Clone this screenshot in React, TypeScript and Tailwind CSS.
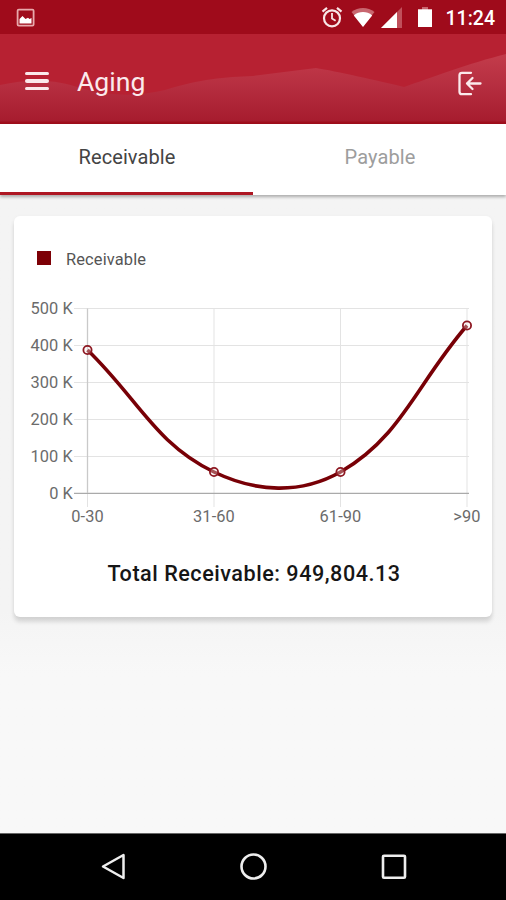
import { useState } from "react";

const points = [
  { label: "0-30", x: 73.5, y: 74 },
  { label: "31-60", x: 200, y: 196 },
  { label: "61-90", x: 326.5, y: 196 },
  { label: ">90", x: 453, y: 49.5 },
];

const ticks = [
  { label: "500 K", y: 32.5 },
  { label: "400 K", y: 69.5 },
  { label: "300 K", y: 106.5 },
  { label: "200 K", y: 143.5 },
  { label: "100 K", y: 180.5 },
  { label: "0 K", y: 217.5 },
];

const StatusBar = () => (
  <div className="flex h-[34px] shrink-0 items-center bg-[#9f0b1b] pl-4 pr-[11px] text-white">
    {/* Screenshot notification */}
    <svg width="19" height="19" viewBox="0 0 19 19">
      <rect x="1.6" y="1.6" width="16" height="16" rx="1.2" fill="none" stroke="#e8a9ac" strokeWidth="1.8" />
      <path d="M3.5 15.5V11l3-3 3 3 2.5-1.2 1.5 1.2 2-1v5.5z" fill="#fff" />
    </svg>
    <svg width="22" height="22" viewBox="0 0 22 22" className="ml-[286px]" fill="none" stroke="#f8e6e7">
      <circle cx="11" cy="12.3" r="8" strokeWidth="2.2" />
      <path d="M11 7v5.5l3.6 2.2" strokeWidth="1.8" />
      <path d="M1.5 5.6l4.5-3.7M20.5 5.6L16 1.9" strokeWidth="2.2" />
    </svg>
    <svg width="24" height="20" viewBox="0 0 24 20" className="ml-2">
      <path d="M0.500 5C7-0.500 17-0.500 23.500 5L12 19.5z" fill="#c8666f" />
      <path d="M2.800 8.400c5.500-4.400 12.900-4.400 18.400 0L12 20z" fill="#fff" />
    </svg>
    <svg width="22" height="22" viewBox="0 0 22 22" className="ml-[5px]">
      <path d="M22 1v21H1z" fill="#c0505b" />
      <path d="M17 6v16H1z" fill="#fff" />
    </svg>
    <svg width="16" height="20" viewBox="0 0 16 20" className="ml-[15px]">
      <path d="M5 0h6v3H5z" fill="#c8666f" />
      <path d="M1 2.300h14V20H1z" fill="#fff" />
    </svg>
    <span className="ml-auto pt-[4px] text-[19.5px] font-medium leading-none">11:24</span>
  </div>
);

const Header = () => (
  <header className="relative h-[90px] shrink-0 bg-[#b72132]">
    {/* Mountain backdrop */}
    <svg className="absolute inset-0" width="506" height="90" viewBox="0 0 506 90">
      <defs>
        <linearGradient id="ridge" gradientUnits="userSpaceOnUse" x1="0" y1="20" x2="0" y2="90">
          <stop offset="0" stopColor="#c33c4b" />
          <stop offset="0.45" stopColor="#b62e40" />
          <stop offset="1" stopColor="#a51b2d" />
        </linearGradient>
      </defs>
      <path d="M0 51C30 44 60 46 80 54C110 62 135 63 165 56C200 45 225 43 253 42L316 34C335 37 380 47 404 53C430 44 470 29 506 20V90H0z" fill="url(#ridge)" />
      <path d="M0 88.7h506" stroke="#9f0e1c" strokeWidth="2.6" />
    </svg>
    <div className="relative flex h-full items-center pl-[25px] pr-[23px] pt-1 text-[#fbeaec]">
      <button aria-label="Menu" className="flex w-[24px] flex-col gap-1">
        <span className="h-[3.5px] rounded-xs bg-[#fbe9eb]" />
        <span className="h-[3.5px] rounded-xs bg-[#fbe9eb]" />
        <span className="h-[3.5px] rounded-xs bg-[#fbe9eb]" />
      </button>
      <h1 className="ml-[28px] pt-[2px] text-[26.6px] leading-none">Aging</h1>
      <button aria-label="Log out" className="ml-auto pt-1">
        <svg width="25" height="25" viewBox="0 0 25 25" fill="none" stroke="currentColor" strokeWidth="2.3" strokeLinecap="round" strokeLinejoin="round">
          <path d="M13 1.8H4Q1.5 1.8 1.5 4.3v16.4q0 2.5 2.5 2.500H13" />
          <path d="M22.5 12.5H9M14.5 7l-5.5 5.5L14.5 18" />
        </svg>
      </button>
    </div>
  </header>
);

const AgingChart = () => (
  <svg width="478" height="260" viewBox="0 0 478 260" className="block">
    <g stroke="#e3e3e3" strokeWidth="1">
      {ticks.map((t) => (
        <path key={t.label} d={`M60 ${t.y}H455`} />
      ))}
      {points.map((p) => (
        <path key={p.label} d={`M${p.x} 32.5V231`} />
      ))}
    </g>
    <path d="M60 217.3H455" stroke="#aaa" strokeWidth="1.3" />
    <path d="M73.5 32.5V217" stroke="#c9c9c9" strokeWidth="1.3" />
    <g fill="#6b6b6b" fontSize="16.4" letterSpacing="0.1">
      {ticks.map((t) => (
        <text key={t.label} x="59" y={t.y + 5} textAnchor="end">{t.label}</text>
      ))}
      {points.map((p) => (
        <text key={p.label} x={p.x} y="246" textAnchor="middle">{p.label}</text>
      ))}
    </g>
    <path
      d="M73.5 74C124 122.8 141.2 167.6 200 196C242.4 216.4 286.5 218.5 326.5 196C387.7 160.6 402.4 108.1 453 49.5"
      fill="none"
      stroke="#780006"
      strokeWidth="3.6"
    />
    <g fill="#fbeeee" fillOpacity="0.35" stroke="#8d1721" strokeWidth="1.8">
      {points.map((p) => (
        <circle key={p.label} cx={p.x} cy={p.y} r="4.1" />
      ))}
    </g>
  </svg>
);

const NavBar = () => (
  <nav className="flex h-[67px] shrink-0 items-center justify-between border-t border-[#666] bg-black pl-[101px] pr-[99px]">
    <svg width="27" height="30" viewBox="0 0 27 30" fill="none" stroke="#eee" strokeWidth="2.5" strokeLinejoin="round">
      <path d="M22.5 3v23L2 14.5z" />
    </svg>
    <svg width="30" height="30" viewBox="0 0 30 30" fill="none" stroke="#eee" strokeWidth="2.6">
      <circle cx="13.5" cy="14.5" r="12" />
    </svg>
    <svg width="26" height="26" viewBox="0 0 26 26" fill="none" stroke="#eee" strokeWidth="2.6">
      <rect x="2" y="1.8" width="22" height="22" rx="1" />
    </svg>
  </nav>
);

export default function App() {
  const [tab, setTab] = useState("Receivable");

  return (
    <div className="flex h-[900px] w-[506px] flex-col overflow-hidden bg-[#f8f8f8] font-['Roboto',sans-serif]">
      <StatusBar />
      <Header />

      {/* Tabs */}
      <div className="z-10 flex h-[71px] shrink-0 bg-white shadow-[0_2px_3px_rgba(0,0,0,0.3)]">
        {["Receivable", "Payable"].map((name) => (
          <button
            key={name}
            onClick={() => setTab(name)}
            className={`flex-1 border-b-3 pb-[3px] pl-px text-[20px] tracking-[0.1px] ${
              tab === name ? "border-[#ae1723] text-[#444]" : "border-transparent text-[#9d9d9d]"
            }`}
          >
            {name}
          </button>
        ))}
      </div>

      <main className="flex-1 bg-linear-to-b from-[#f4f4f4] from-65% to-[#f8f8f8] to-75% px-3.5 pt-[21px]">
        <section className="h-[401px] rounded-md bg-white shadow-[0_5px_4px_rgba(0,0,0,0.12),0_1px_5px_rgba(0,0,0,0.04)]">
          <div className="flex h-[60px] items-end pb-[6px] pl-[23px]">
            <span className="mb-[5px] h-3.5 w-3.5 bg-[#7d0006]" />
            <span className="ml-[15px] text-[16.4px] leading-5 tracking-[0.15px] text-[#555]">Receivable</span>
          </div>
          <AgingChart />
          <p className="pt-[22px] pl-[2px] text-center text-[21.6px] font-medium leading-8 tracking-[0.52px] text-[#161616]">
            Total Receivable: 949,804.13
          </p>
        </section>
      </main>

      <NavBar />
    </div>
  );
}
